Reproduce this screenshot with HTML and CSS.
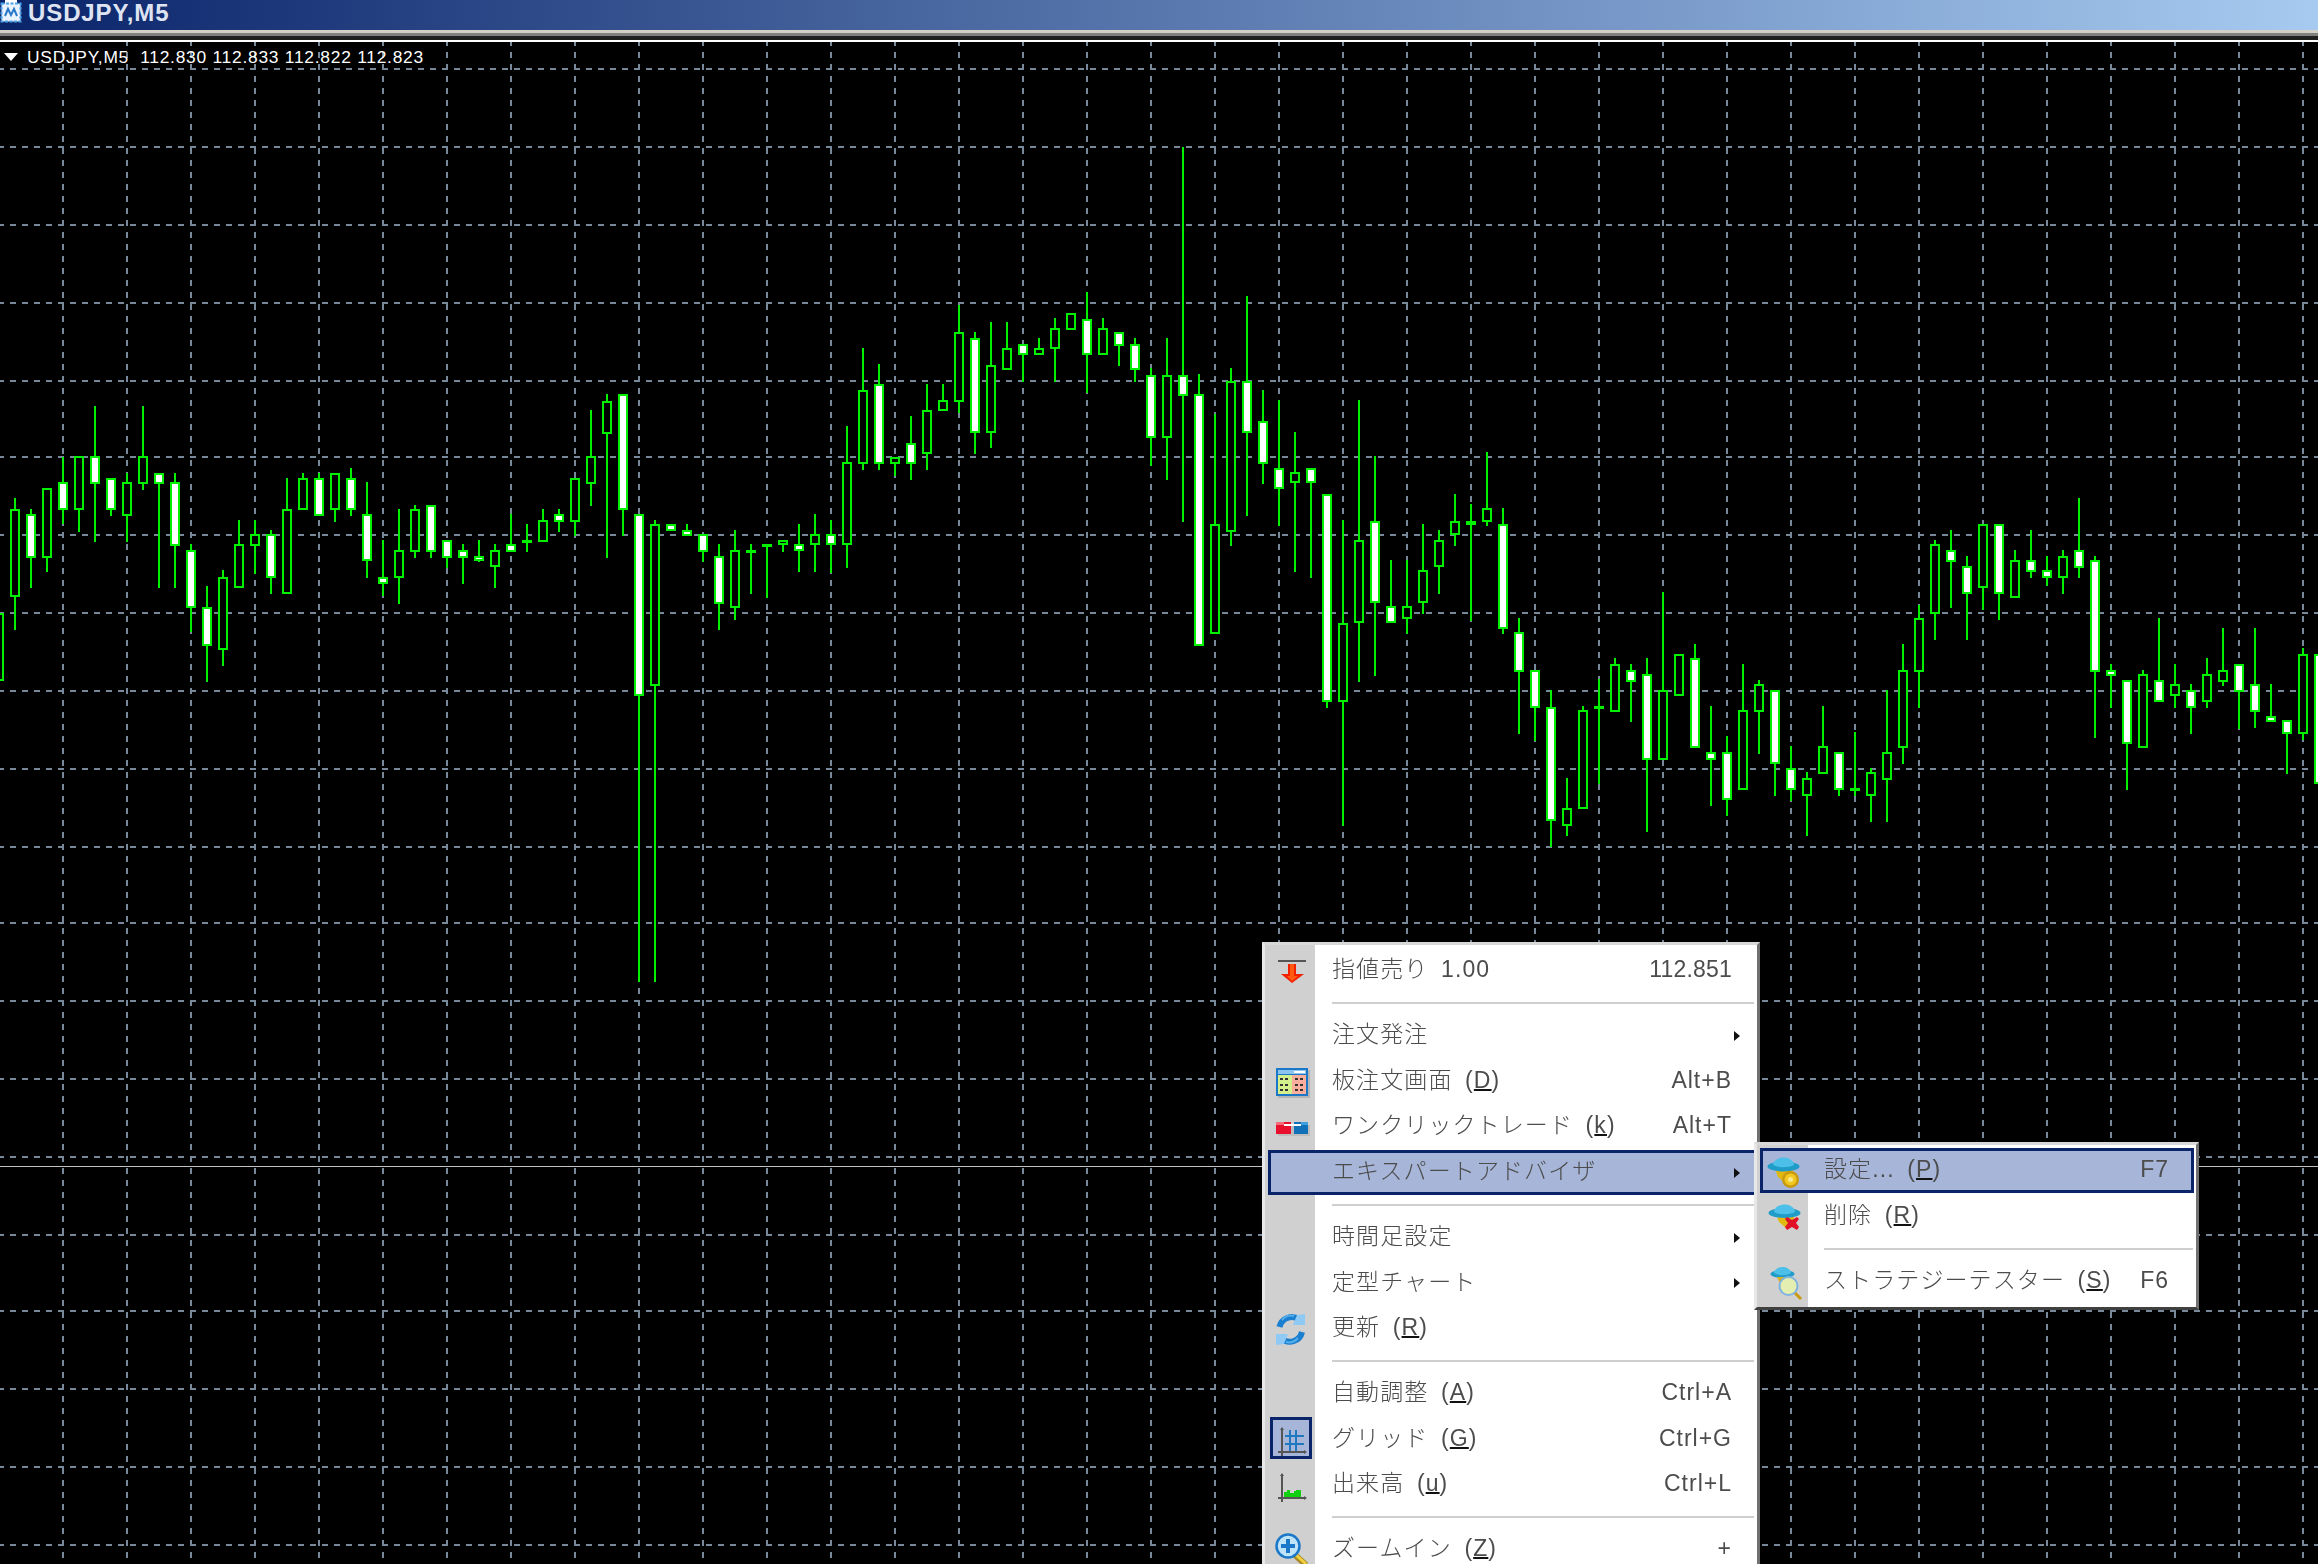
FILE: index.html
```html
<!DOCTYPE html>
<html lang="ja">
<head>
<meta charset="utf-8">
<title>USDJPY,M5</title>
<link rel="stylesheet" href="styles.css">
</head>
<body>
<div class="window">
  <header class="titlebar">
    <svg class="title-icon" width="22" height="23" viewBox="0 0 22 23">
      <rect x="5" y="0" width="12" height="4" fill="#fff"/>
      <rect x="1.5" y="3.5" width="19" height="18" fill="#e8f3ff" stroke="#4da3e8" stroke-width="2" stroke-dasharray="3 1.5"/>
      <path d="M5 16 L8 9 L11 15 L14 9 L17 16" fill="none" stroke="#2a78c8" stroke-width="2"/>
    </svg>
    <span class="title-text">USDJPY,M5</span>
  </header>
  <div class="frame-line"></div>
  <main class="chart">
    <svg id="chart-svg" class="chart-svg" viewBox="0 42 2318 1522"></svg>
    <div class="legend"><span class="legend-arrow"></span><span class="legend-text">USDJPY,M5  112.830 112.833 112.822 112.823</span></div>

    <nav class="menu main-menu">
      <div class="row">
        <span class="ico"><svg width="44" height="44" viewBox="0 0 44 44"><rect x="9" y="11" width="28" height="2" fill="#555"/><path d="M19 15h8v10h8l-12 9-11-9h7z" fill="#f02000"/><path d="M21 15h4v12h4l-6 5-5-5h3z" fill="#ff5a10"/></svg></span>
        <span class="label">指値売り&ensp;1.00</span><span class="accel accel-num">112.851</span>
      </div>
      <div class="sep"></div>
      <div class="row">
        <span class="ico"></span><span class="label">注文発注</span><span class="arrow"></span>
      </div>
      <div class="row">
        <span class="ico"><svg width="44" height="44" viewBox="0 0 44 44"><rect x="9" y="11" width="32" height="28" fill="#b4b4b4"/><rect x="7" y="9" width="32" height="28" fill="#1b78c8"/><rect x="9" y="11" width="28" height="4" fill="#8cc4f0"/><rect x="25" y="12" width="11" height="2" fill="#fff"/><rect x="9" y="16" width="14" height="19" fill="#d4f08c"/><rect x="23" y="16" width="14" height="19" fill="#f8ae9c"/><path d="M11 19h3v2h-3zM16 19h3v2h-3zM26 19h3v2h-3zM31 19h3v2h-3zM11 25h3v2h-3zM16 25h3v2h-3zM26 25h3v2h-3zM31 25h3v2h-3zM11 30h3v2h-3zM16 30h3v2h-3zM26 30h3v2h-3zM31 30h3v2h-3z" fill="#333"/></svg></span>
        <span class="label">板注文画面&ensp;(<u>D</u>)</span><span class="accel">Alt+B</span>
      </div>
      <div class="row">
        <span class="ico"><svg width="44" height="44" viewBox="0 0 44 44"><rect x="9" y="20" width="32" height="11" fill="#bdbdbd"/><rect x="7" y="17" width="15" height="12" fill="#e8102c"/><rect x="25" y="17" width="14" height="12" fill="#1070b8"/><rect x="7" y="17" width="8" height="3" fill="#f86a78"/><rect x="32" y="17" width="7" height="3" fill="#3f9ede"/><rect x="15" y="19" width="17" height="2" fill="#fff"/></svg></span>
        <span class="label">ワンクリックトレード&ensp;(<u>k</u>)</span><span class="accel">Alt+T</span>
      </div>
      <div class="row row-active">
        <span class="ico"></span><span class="label">エキスパートアドバイザ</span><span class="arrow"></span>
      </div>
      <div class="sep"></div>
      <div class="row">
        <span class="ico"></span><span class="label">時間足設定</span><span class="arrow"></span>
      </div>
      <div class="row">
        <span class="ico"></span><span class="label">定型チャート</span><span class="arrow"></span>
      </div>
      <div class="row">
        <span class="ico"><svg width="44" height="44" viewBox="0 0 44 44"><path d="M10.500 20 A12.500 12.500 0 0 1 30 12.500" fill="none" stroke="#1a7fd0" stroke-width="6"/><path d="M33 25 A12.500 12.500 0 0 1 13 32" fill="none" stroke="#1a7fd0" stroke-width="6"/><path d="M28 8 L36 7 L36 18 L24 18 Z" fill="#8fcaf4"/><path d="M7 27 L19 27 L15 37 L7 38 Z" fill="#8fcaf4"/><path d="M13 13 A12 12 0 0 1 25 9" fill="none" stroke="#55aee8" stroke-width="2"/><path d="M17 35 A12 12 0 0 0 29 31" fill="none" stroke="#55aee8" stroke-width="2"/></svg></span>
        <span class="label">更新&ensp;(<u>R</u>)</span>
      </div>
      <div class="sep"></div>
      <div class="row">
        <span class="ico"></span><span class="label">自動調整&ensp;(<u>A</u>)</span><span class="accel">Ctrl+A</span>
      </div>
      <div class="row">
        <span class="ico"><svg width="44" height="44" viewBox="0 0 44 44"><rect x="2.500" y="1.500" width="39" height="39" fill="#a6b5d8" stroke="#0a246a" stroke-width="3"/><path d="M16 19h19M16 27h19M21 13v21M27 13v21" fill="none" stroke="#1f78c0" stroke-width="2"/><path d="M13 11v28M9 35h28" fill="none" stroke="#555" stroke-width="2"/><path d="M11 13l2-3 2 3zM35 33l3 2-3 2z" fill="#555"/></svg></span>
        <span class="label">グリッド&ensp;(<u>G</u>)</span><span class="accel">Ctrl+G</span>
      </div>
      <div class="row">
        <span class="ico"><svg width="44" height="44" viewBox="0 0 44 44"><path d="M13 11v28M9 35h28" fill="none" stroke="#555" stroke-width="2"/><path d="M11 13l2-3 2 3zM35 33l3 2-3 2z" fill="#555"/><path d="M15 34v-5h3v-2h3v3h4v-2h2v-1h5v7z" fill="#10d010"/></svg></span>
        <span class="label">出来高&ensp;(<u>u</u>)</span><span class="accel">Ctrl+L</span>
      </div>
      <div class="sep"></div>
      <div class="row">
        <span class="ico"><svg width="44" height="44" viewBox="0 0 44 44"><path d="M26 27l11 10" stroke="#a88a20" stroke-width="6"/><path d="M26 26l11 10" stroke="#f0d040" stroke-width="3"/><circle cx="19" cy="18" r="11.500" fill="#bfe4fa" stroke="#1b78c8" stroke-width="2.500"/><path d="M12 18h14M19 11v14" stroke="#1b78c8" stroke-width="4"/></svg></span>
        <span class="label">ズームイン&ensp;(<u>Z</u>)</span><span class="accel">+</span>
      </div>
    </nav>

    <nav class="menu sub-menu">
      <div class="row row-active">
        <span class="ico"><svg width="44" height="44" viewBox="0 0 44 44"><path d="M13 20h18v8l-8 6-7-6z" fill="#e0b810"/><ellipse cx="21.500" cy="17.500" rx="16" ry="5" fill="#1f9cc8"/><path d="M11 16 C12 6 31 6 32 16 C26 19 17 19 11 16Z" fill="#4cc0e8"/><circle cx="28.500" cy="30.500" r="8.500" fill="#c89a10"/><circle cx="28.500" cy="30.500" r="6" fill="#f0c820"/><circle cx="28.500" cy="30.500" r="2.500" fill="#f8e890"/></svg></span>
        <span class="label">設定...&ensp;(<u>P</u>)</span><span class="accel">F7</span>
      </div>
      <div class="row">
        <span class="ico"><svg width="44" height="44" viewBox="0 0 44 44"><path d="M15 20h18v8l-8 6-7-6z" fill="#e0b810"/><ellipse cx="23.500" cy="19" rx="16" ry="5" fill="#1f9cc8"/><path d="M13 18 C14 8 33 8 34 18 C28 21 19 21 13 18Z" fill="#4cc0e8"/><path d="M26 23l5 3 5-3 2 2-3 4 3 4-2 3-5-3-5 3-2-3 3-4-3-4z" fill="#e01028"/></svg></span>
        <span class="label">削除&ensp;(<u>R</u>)</span>
      </div>
      <div class="sep"></div>
      <div class="row">
        <span class="ico"><svg width="44" height="44" viewBox="0 0 44 44"><ellipse cx="21.500" cy="15" rx="12" ry="4" fill="#1f9cc8"/><path d="M13 14 C14 6 29 6 30 14 C26 17 18 17 13 14Z" fill="#4cc0e8"/><path d="M16 18h10v6l-6 3z" fill="#d8b020"/><path d="M33 33l7 7" stroke="#c89a10" stroke-width="3"/><circle cx="27.500" cy="27" r="9" fill="#e4eeb0" stroke="#7fb4e0" stroke-width="2"/></svg></span>
        <span class="label">ストラテジーテスター&ensp;(<u>S</u>)</span><span class="accel">F6</span>
      </div>
    </nav>
  </main>
</div>
<script src="chart.js"></script>
</body>
</html>
```

FILE: styles.css
```css
* { box-sizing: border-box; }
html, body { margin: 0; height: 100%; background: #000; overflow: hidden; }

.window { display: flex; flex-direction: column; height: 100vh; }

.titlebar {
  height: 30px; flex: none; display: flex; align-items: flex-start; gap: 6px;
  overflow: hidden;
  background: linear-gradient(to right, #0a246a, #a6caf0);
}
.title-icon { flex: none; }
.title-text {
  font: bold 24px/26px "Liberation Sans", sans-serif; color: #dfe4f2; letter-spacing: .9px;
}
.frame-line {
  height: 12px; flex: none;
  background: linear-gradient(to bottom, #d4d0c8 0 3px, #808080 3px 6px, #202020 6px 10px, #fff 10px 12px);
}

.chart { position: relative; flex: 1; background: #000; overflow: hidden; }
.chart-svg { display: block; width: 100%; height: 100%; shape-rendering: crispEdges; }
.grid { stroke: #778899; stroke-width: 2; stroke-dasharray: 6 6; }
.bid { stroke: #c0c0c0; stroke-width: 1; }
.wick { fill: #00f000; }
.body-frame { fill: #00f000; }
.body-up { fill: #000; }
.body-down { fill: #fff; }

.legend {
  position: absolute; left: 4px; top: 5px; display: flex; align-items: center; gap: 9px;
  font: 17.4px/20px "Liberation Sans", sans-serif; color: #fff; white-space: pre; letter-spacing: .74px;
}
.legend-arrow {
  width: 0; height: 0; border-left: 7px solid transparent; border-right: 7px solid transparent;
  border-top: 8px solid #fff;
}

.menu {
  position: absolute; display: flex; flex-direction: column;
  font: 300 23px/1 "Liberation Sans", "Noto Sans CJK JP", sans-serif; color: #4c4c4c;
  background: linear-gradient(to right, #d0d0d0 50px, #fff 50px) padding-box;
  border: 3px solid; border-color: #d8d8d8 #707070 #404040 #e8e8e8;
}
.main-menu { left: 1262px; top: 900px; width: 498px; padding-left: 1px; padding-top: 3px; }
.sub-menu {
  left: 1754px; top: 1100px; width: 445px; padding-top: 3px; padding-bottom: 3px;
  background: linear-gradient(to right, #d0d0d0 51px, #fff 51px) padding-box;
}

.row { display: flex; align-items: center; height: 45.6px; flex: none; padding-right: 25px; }
.sub-menu .row { height: 46px; padding-right: 27px; }
.row-active { background: #a6b5d8; box-shadow: inset 0 0 0 3px #0a246a; margin-left: 2px; }
.sub-menu .row-active { margin: 0 2px 0 3px; height: 45px; padding-right: 25px; }

.ico { width: 50px; height: 44px; flex: none; display: flex; align-items: center; justify-content: center; }
.row-active .ico { width: 48px; }
.sub-menu .ico { width: 51px; }
.sub-menu .row-active .ico { width: 48px; }
.ico svg { display: block; flex: none; }

.label {
  flex: 1; margin-left: 16px; padding-bottom: 2px; letter-spacing: 1.1px; white-space: pre;
  filter: blur(.5px);
}
.accel { flex: none; padding-bottom: 2px; letter-spacing: 1px; filter: blur(.5px); }
.accel-num { letter-spacing: .2px; }
.label u, .accel u { text-decoration-thickness: 2px; text-decoration-color: #111; }

.arrow {
  flex: none; width: 0; height: 0; margin-right: -8px;
  border-left: 6px solid #111; border-top: 5px solid transparent; border-bottom: 5px solid transparent;
}

.sep { height: 19.4px; flex: none; display: flex; align-items: center; margin-left: 66px; margin-right: 3px; }
.sep::after { content: ""; display: block; width: 100%; height: 2px; background: #cfcfcf; }
.sub-menu .sep { margin-left: 67px; height: 19px; }
```

FILE: chart.js
```js
// Candle tables: [wickTop, wickBottom, bodyTop, bodyBottom, filled], read off in
// the vertical units of each section (origin + value / scale = page y).
var SECTIONS = [
  { origin: 380, scale: 2.529, rows: [
    [589,762,589,762,0],[298,632,325,550,0],[325,526,340,449,1],[274,486,274,449,0],[195,365,259,328,1],
    [195,385,193,328,0],[66,410,193,262,1],[248,344,249,328,1],[234,410,259,343,0],[66,278,193,262,0],
    [234,526,234,262,1],[234,526,259,419,1],[415,637,431,576,1],[521,764,573,672,1],[481,723,497,682,0],
    [354,525,416,525,0],[354,490,390,419,0],[380,541,390,500,1],[248,540,325,540,0],[234,328,249,328,0],
    [234,343,249,343,1],[234,359,234,328,0],[223,344,249,328,1],[259,501,340,459,1],[405,546,497,516,1],
    [325,567,431,500,0],[315,450,325,434,0],[315,450,315,434,1],[405,475,405,449,1],[416,516,431,449,1],
    [405,460,446,459,1],[416,526,431,474,0],[340,435,416,434,1],[364,435,407,407,0],[325,410,355,409,0],
    [325,385,340,358,1],[249,395,249,358,0],[76,318,193,262,0],[36,450,52,136,0],[36,395,36,328,1],
    [340,1522,340,798,1],[354,1522,365,773,0],[365,383,365,383,1],[365,395,380,394,1],[390,460,390,434,1],
    [416,632,446,566,1],[380,607,431,576,0],[416,541,432,432,0],[416,551,417,417,0]
  ]},
  { origin: 140, scale: 2.178, rows: [
    [872,897,872,882,0],[836,941,881,896,1],[814,941,859,883,0],[828,944,859,883,1],[623,932,702,883,0],
    [453,719,545,705,0],[488,719,532,705,1],[690,732,690,705,0],[601,740,659,705,1],[531,719,589,683,0],
    [531,591,567,591,0],[359,595,419,570,0],[418,684,432,639,1],[396,671,489,639,0],[396,500,454,500,0],
    [445,526,445,469,1],[431,469,454,469,0],[388,527,410,456,0],[376,413,376,413,0],[331,552,389,469,1],
    [388,469,410,469,0],[419,492,419,448,1],[431,527,445,500,1],[497,710,511,648,1],[431,740,511,648,0],
    [15,832,511,557,1],[510,1102,554,1101,1],[597,1075,837,1075,0],[497,884,525,853,0],[340,819,525,639,1],
    [544,749,611,705,1],[566,841,715,761,1],[636,941,724,748,0],[715,954,715,748,1],[772,1237,772,1223,1],
    [828,1494,1051,1223,0],[566,1180,872,1053,0],[688,1167,829,1009,1],[915,1053,1016,1053,1],[915,1076,1016,1044,0],
    [836,1032,937,1009,0],[850,989,872,931,0],[771,884,829,861,0],[793,1048,829,839,0],[680,841,802,832,0],
    [801,1076,837,1066,1],[1041,1294,1072,1158,1],[1155,1310,1155,1237,1],[1198,1539,1234,1484,1]
  ]},
  { origin: 480, scale: 3, rows: [
    [895,1068,985,1037,0],[679,988,691,988,0],[598,912,681,681,0],[534,695,553,695,0],[552,725,571,605,1],
    [534,1056,583,839,1],[336,839,631,839,0],[523,647,523,647,0],[492,803,535,803,1],[678,978,817,839,1],
    [768,1008,817,959,1],[552,929,691,929,0],[600,822,613,695,0],[631,948,631,851,1],[798,962,865,929,1],
    [877,1068,895,947,0],[678,881,799,881,0],[817,948,817,929,1],[756,948,927,927,0],[865,1026,877,947,0],
    [631,1026,817,899,0],[492,852,571,803,0],[376,684,415,575,0],[180,480,193,401,0],[150,384,211,245,1],
    [228,480,259,341,1],[132,390,133,323,0],[132,420,133,341,1],[210,353,241,353,0],[150,294,241,275,1],
    [228,318,271,293,1],[210,342,229,293,0],[54,294,211,263,1],[228,774,241,575,1],[552,684,571,587,1],
    [601,930,601,791,1],[570,803,583,803,0],[414,665,601,665,1],[552,684,613,647,0],[612,762,631,683,1],
    [534,684,583,665,0],[444,618,571,605,0],[552,748,553,635,1],[444,744,613,695,1],[612,725,709,725,1],
    [721,882,721,761,1],[504,780,523,761,0],[523,911,523,911,1]
  ]}
];

var GRID_Y = [69,147,225,303,381,457,535,613,691,769,847,923,1001,1079,1157,1235,1311,1389,1467,1545];
var BID_Y = 1166.5;
var SVG_NS = "http://www.w3.org/2000/svg";
var svg = document.getElementById("chart-svg");

function add(tag, cls, attrs) {
  var el = document.createElementNS(SVG_NS, tag);
  el.setAttribute("class", cls);
  for (var k in attrs) el.setAttribute(k, attrs[k]);
  svg.appendChild(el);
}
function box(cls, x, y, w, h) { add("rect", cls, { x: x, y: y, width: w, height: h }); }

GRID_Y.forEach(function (y) { add("line", "grid", { x1: -2, x2: 2318, y1: y, y2: y }); });
for (var gx = 63; gx < 2318; gx += 64) add("line", "grid", { x1: gx, x2: gx, y1: 40, y2: 1564 });
add("line", "bid", { x1: 0, x2: 2318, y1: BID_Y, y2: BID_Y });

var cx = -1;
SECTIONS.forEach(function (sec) {
  function py(v) { return Math.round(sec.origin + v / sec.scale); }
  sec.rows.forEach(function (r) {
    var top = py(r[2]), bot = py(r[3]);
    box("wick", cx - 1, py(r[0]), 2, py(r[1]) - py(r[0]));
    if (bot - top < 3) {
      box("body-frame", cx - 5, top - 1, 10, 3);
    } else {
      box("body-frame", cx - 5, top, 10, bot - top);
      if (bot - top > 4) box(r[4] ? "body-down" : "body-up", cx - 3, top + 2, 6, bot - top - 4);
    }
    cx += 16;
  });
});
```
